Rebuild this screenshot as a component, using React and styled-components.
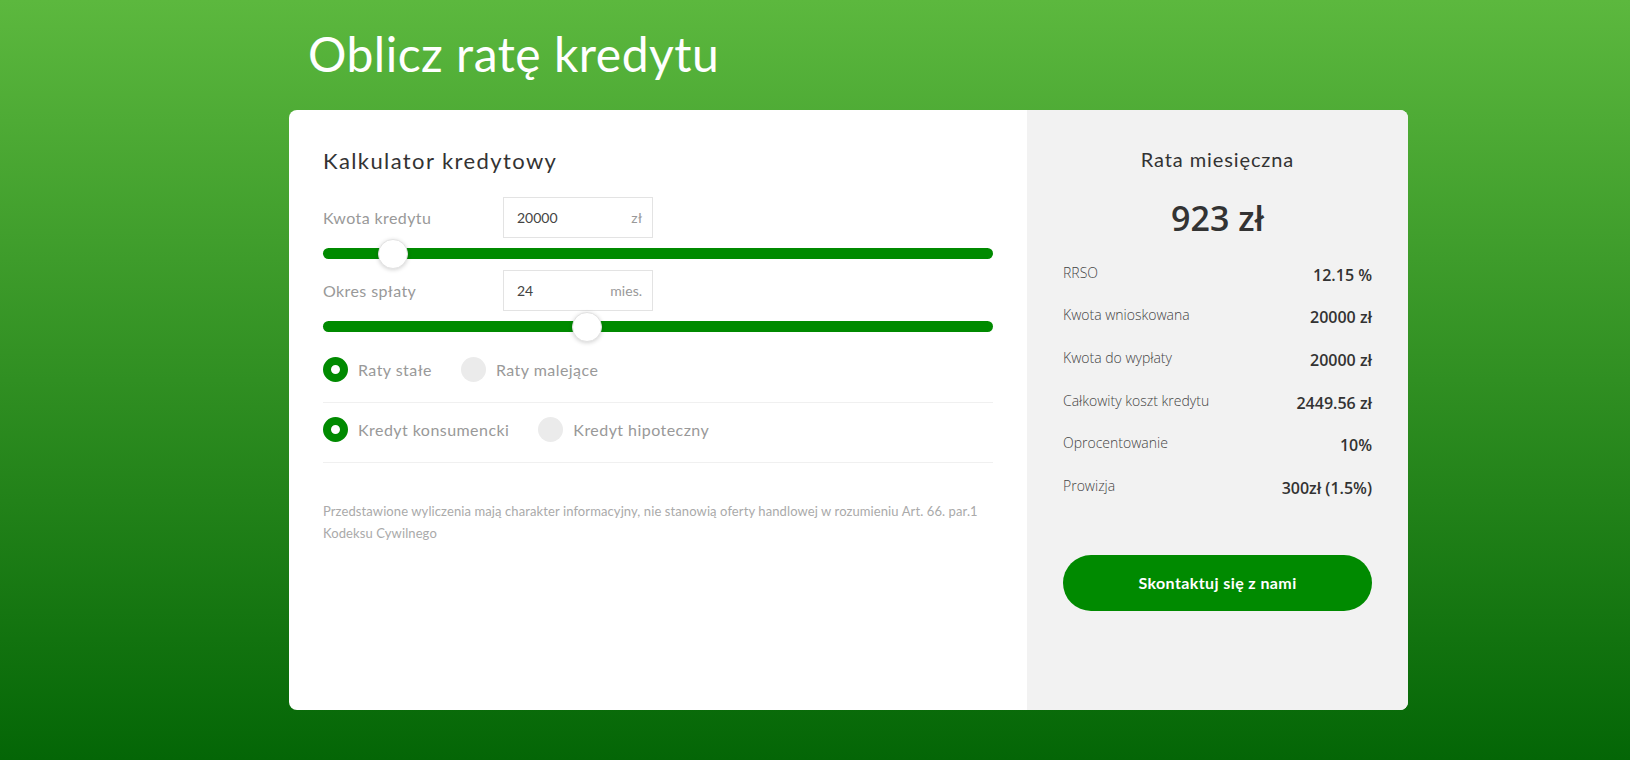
import React, { useState } from "react";
import styled, { createGlobalStyle } from "styled-components";

const GlobalStyle = createGlobalStyle`
  html, body { margin: 0; padding: 0; }
  body { font-family: Lato, "Noto Sans", sans-serif; }
  * { box-sizing: border-box; }
`;

const GREEN = "#008a00";

const Page = styled.div`
  min-height: 100vh;
  background: linear-gradient(180deg, #5cb83e 0%, #046606 100%);
  padding-top: 25px;
`;

const Container = styled.div`
  width: 1119px;
  margin-left: 289px;
`;

const Title = styled.h1`
  margin: 0 0 27px 19px;
  font-family: Lato, sans-serif;
  font-weight: 400;
  font-size: 48px;
  line-height: 57.6px;
  letter-spacing: 0.5px;
  color: #fff;
`;

const Card = styled.div`
  display: grid;
  grid-template-columns: 738px 381px;
  height: 600px;
  background: #fff;
  border-radius: 8px;
  overflow: hidden;
`;

const LeftPanel = styled.div`
  padding: 38px 34px;
`;

const Heading = styled.h2`
  margin: 0 0 23px;
  font-family: Lato, sans-serif;
  font-weight: 400;
  font-size: 22px;
  line-height: 26px;
  letter-spacing: 1.4px;
  color: #333;
`;

const FieldRow = styled.div`
  display: flex;
  align-items: center;
  height: 41px;
`;

const FieldLabel = styled.span`
  width: 180px;
  font-size: 16px;
  letter-spacing: 0.4px;
  color: #999;
`;

const InputBox = styled.label`
  width: 150px;
  height: 41px;
  border: 1px solid #e3e3e3;
  display: flex;
  align-items: center;
  padding: 0 10px 0 13px;
  font-size: 14px;
`;

const InputField = styled.input`
  flex: 1;
  min-width: 0;
  border: none;
  outline: none;
  background: transparent;
  padding: 0;
  font-family: inherit;
  font-size: 14px;
  color: #444;
`;

const Unit = styled.span`
  color: #999;
`;

const Range = styled.input`
  -webkit-appearance: none;
  appearance: none;
  display: block;
  width: 100%;
  height: 32px;
  margin: 0;
  background: transparent;
  outline: none;

  &::-webkit-slider-runnable-track {
    height: 11px;
    border-radius: 6px;
    background: ${GREEN};
  }
  &::-webkit-slider-thumb {
    -webkit-appearance: none;
    appearance: none;
    width: 30px;
    height: 30px;
    margin-top: -9.5px;
    border-radius: 50%;
    background: #fff;
    border: 1px solid #e2e2e2;
    box-shadow: 0 1px 4px rgba(0, 0, 0, 0.18);
  }
`;

const RadioRow = styled.div`
  display: flex;
  align-items: center;
  gap: 29px;
  padding: 14px 0 20px;
  border-bottom: 1px solid #f0f0f0;
`;

const RadioOption = styled.label`
  display: flex;
  align-items: center;
  gap: 10px;
  font-size: 16px;
  letter-spacing: 0.45px;
  color: #999;
  cursor: pointer;
`;

const RadioDot = styled.span`
  width: 25px;
  height: 25px;
  border-radius: 50%;
  background: ${(p) => (p.$checked ? "#fff" : "#ebebeb")};
  border: ${(p) => (p.$checked ? `8px solid ${GREEN}` : "none")};
`;

const Disclaimer = styled.p`
  margin: 37px 0 0;
  font-size: 13px;
  line-height: 22px;
  letter-spacing: 0.1px;
  color: #aaa;
`;

const RightPanel = styled.div`
  background: #f2f2f2;
  padding: 36px 36px;
  display: flex;
  flex-direction: column;
`;

const SummaryTitle = styled.div`
  text-align: center;
  font-family: Lato, sans-serif;
  font-size: 20px;
  line-height: 26px;
  letter-spacing: 0.9px;
  color: #333;
`;

const Amount = styled.div`
  margin-top: 23px;
  text-align: center;
  font-family: "Open Sans", sans-serif;
  font-weight: 600;
  font-size: 34px;
  line-height: 46px;
  color: #333;
`;

const Rows = styled.div`
  margin-top: 23px;
  display: flex;
  flex-direction: column;
  gap: 20.7px;
`;

const Row = styled.div`
  display: flex;
  justify-content: space-between;
  align-items: flex-start;
  height: 22px;
`;

const RowLabel = styled.span`
  font-family: "Open Sans", sans-serif;
  font-weight: 300;
  font-size: 14px;
  line-height: 18px;
  color: #444;
`;

const RowValue = styled.span`
  font-family: "Open Sans", sans-serif;
  font-weight: 600;
  font-size: 16px;
  line-height: 22px;
  color: #333;
`;

const ContactButton = styled.button`
  margin-top: 55.7px;
  width: 100%;
  height: 56px;
  border: none;
  border-radius: 28px;
  background: ${GREEN};
  color: #fff;
  font-family: Lato, sans-serif;
  font-weight: 700;
  font-size: 16px;
  letter-spacing: 0.4px;
  cursor: pointer;
`;

const summary = [
  ["RRSO", "12.15 %"],
  ["Kwota wnioskowana", "20000 zł"],
  ["Kwota do wypłaty", "20000 zł"],
  ["Całkowity koszt kredytu", "2449.56 zł"],
  ["Oprocentowanie", "10%"],
  ["Prowizja", "300zł (1.5%)"],
];

export default function App() {
  const [amount, setAmount] = useState(20000);
  const [months, setMonths] = useState(24);
  const [rateType, setRateType] = useState("stale");
  const [loanType, setLoanType] = useState("konsumencki");

  return (
    <Page>
      <GlobalStyle />
      <Container>
        <Title>Oblicz ratę kredytu</Title>
        <Card>
          <LeftPanel>
            <Heading>Kalkulator kredytowy</Heading>
            <FieldRow>
              <FieldLabel>Kwota kredytu</FieldLabel>
              <InputBox>
                <InputField
                  value={amount}
                  onChange={(e) => setAmount(Number(e.target.value) || 0)}
                />
                <Unit>zł</Unit>
              </InputBox>
            </FieldRow>
            <Range
              type="range"
              min={5000}
              max={180000}
              step={500}
              value={amount}
              onChange={(e) => setAmount(Number(e.target.value))}
            />
            <FieldRow>
              <FieldLabel>Okres spłaty</FieldLabel>
              <InputBox>
                <InputField
                  value={months}
                  onChange={(e) => setMonths(Number(e.target.value) || 0)}
                />
                <Unit>mies.</Unit>
              </InputBox>
            </FieldRow>
            <Range
              type="range"
              min={1}
              max={60}
              value={months}
              onChange={(e) => setMonths(Number(e.target.value))}
            />
            <RadioRow>
              <RadioOption onClick={() => setRateType("stale")}>
                <RadioDot $checked={rateType === "stale"} />
                Raty stałe
              </RadioOption>
              <RadioOption onClick={() => setRateType("malejace")}>
                <RadioDot $checked={rateType === "malejace"} />
                Raty malejące
              </RadioOption>
            </RadioRow>
            <RadioRow>
              <RadioOption onClick={() => setLoanType("konsumencki")}>
                <RadioDot $checked={loanType === "konsumencki"} />
                Kredyt konsumencki
              </RadioOption>
              <RadioOption onClick={() => setLoanType("hipoteczny")}>
                <RadioDot $checked={loanType === "hipoteczny"} />
                Kredyt hipoteczny
              </RadioOption>
            </RadioRow>
            <Disclaimer>
              Przedstawione wyliczenia mają charakter informacyjny, nie stanowią
              oferty handlowej w rozumieniu Art. 66. par.1
              <br />
              Kodeksu Cywilnego
            </Disclaimer>
          </LeftPanel>
          <RightPanel>
            <SummaryTitle>Rata miesięczna</SummaryTitle>
            <Amount>923 zł</Amount>
            <Rows>
              {summary.map(([label, value]) => (
                <Row key={label}>
                  <RowLabel>{label}</RowLabel>
                  <RowValue>{value}</RowValue>
                </Row>
              ))}
            </Rows>
            <ContactButton>Skontaktuj się z nami</ContactButton>
          </RightPanel>
        </Card>
      </Container>
    </Page>
  );
}
